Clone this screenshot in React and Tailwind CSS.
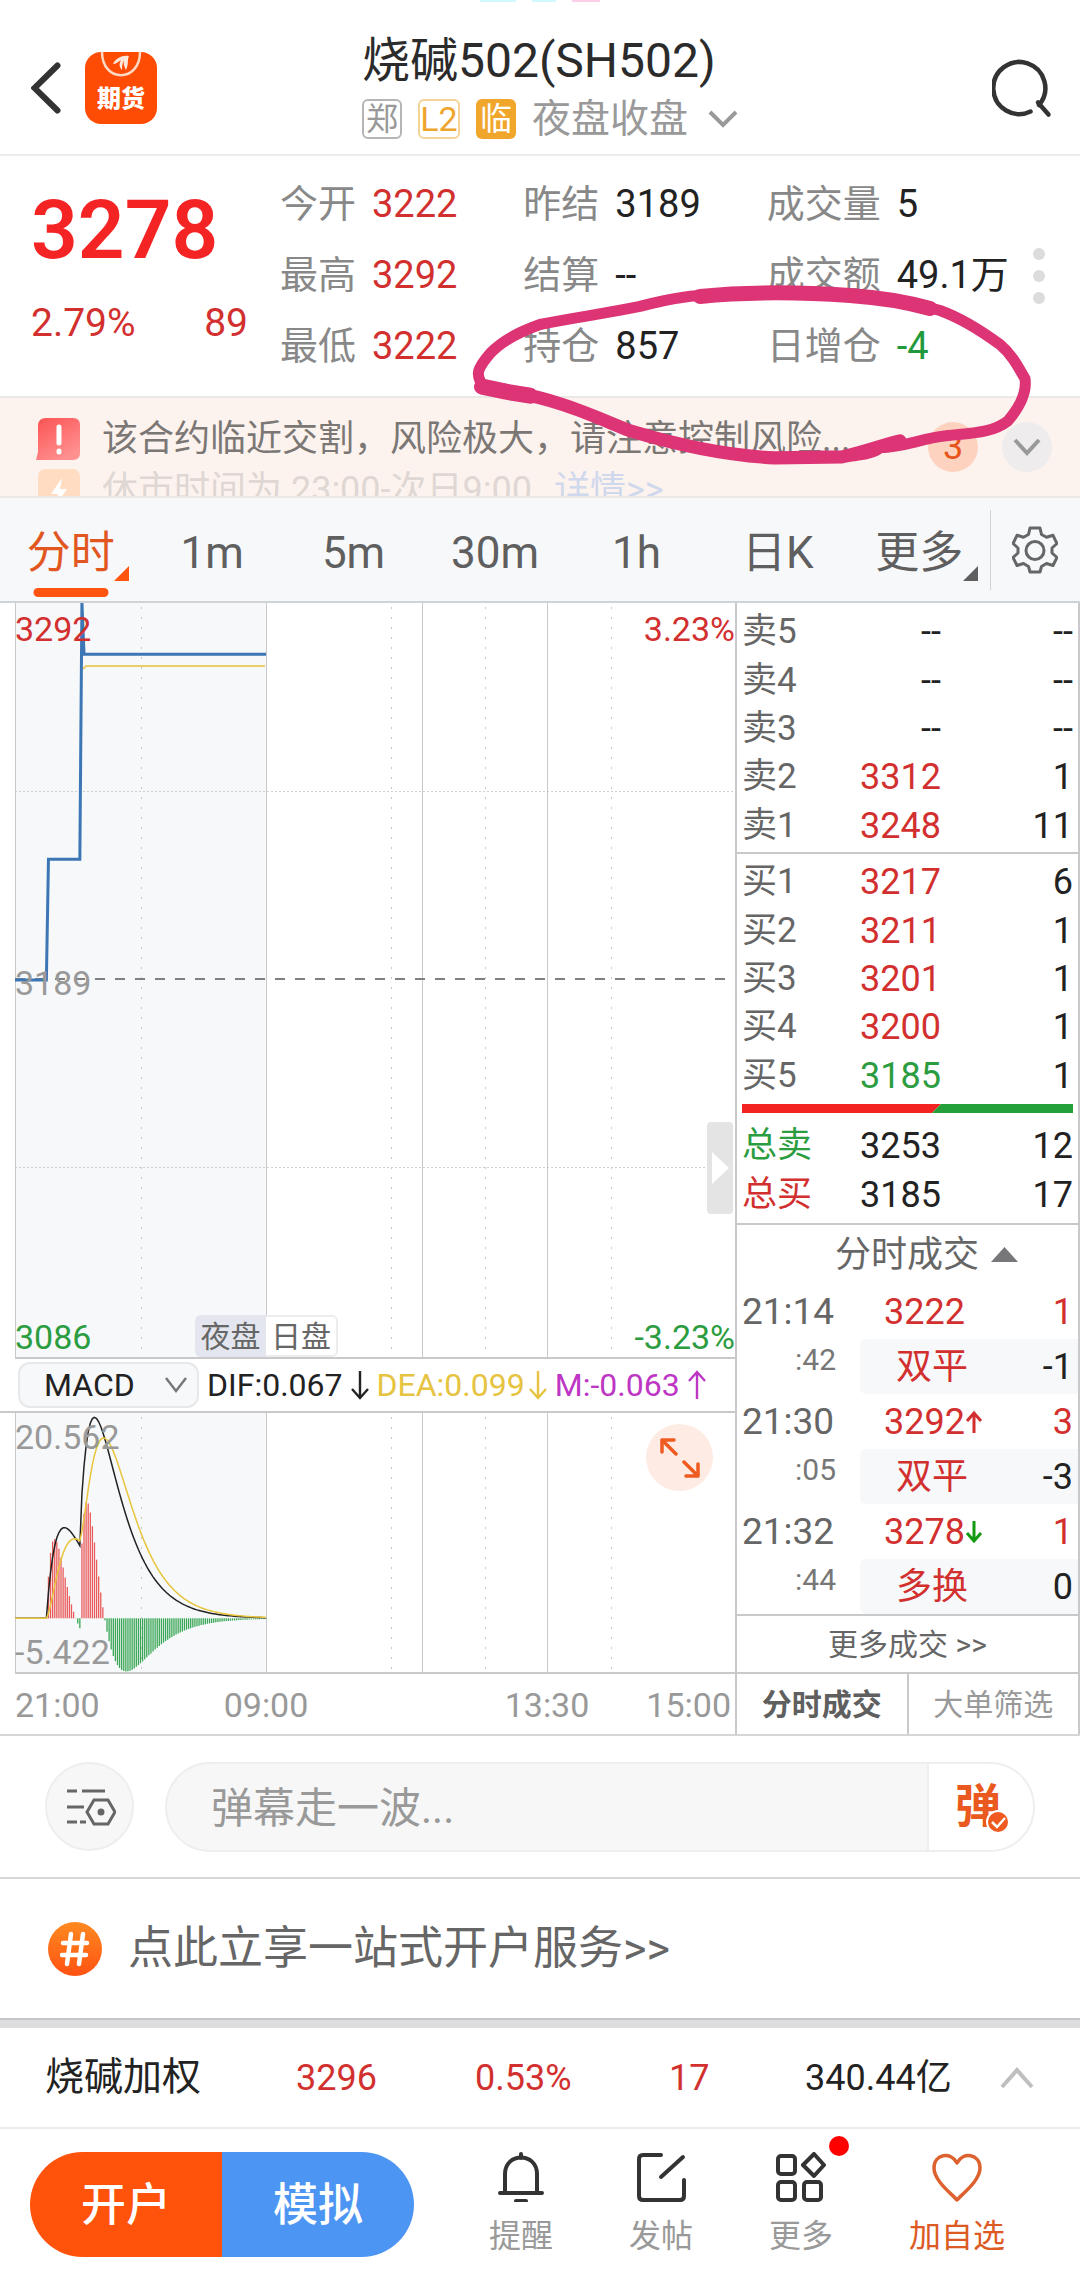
import React from 'react';

const quotes = [
  ['今开', '3222', 'text-[#d2302f]'],
  ['昨结', '3189', 'text-[#222222]'],
  ['成交量', '5', 'text-[#222222]'],
  ['最高', '3292', 'text-[#d2302f]'],
  ['结算', '--', 'text-[#222222]'],
  ['成交额', '49.1万', 'text-[#222222]'],
  ['最低', '3222', 'text-[#d2302f]'],
  ['持仓', '857', 'text-[#222222]'],
  ['日增仓', '-4', 'text-[#219a3c]'],
];

const sells = [
  ['卖5', '--', '--', 'text-[#222222]'],
  ['卖4', '--', '--', 'text-[#222222]'],
  ['卖3', '--', '--', 'text-[#222222]'],
  ['卖2', '3312', '1', 'text-[#d2302f]'],
  ['卖1', '3248', '11', 'text-[#d2302f]'],
];

const buys = [
  ['买1', '3217', '6', 'text-[#d2302f]'],
  ['买2', '3211', '1', 'text-[#d2302f]'],
  ['买3', '3201', '1', 'text-[#d2302f]'],
  ['买4', '3200', '1', 'text-[#d2302f]'],
  ['买5', '3185', '1', 'text-[#2b9c40]'],
];

const trades = [
  { time: '21:14', sec: ':42', price: '3222', volume: '1', kind: '双平', change: '-1' },
  { time: '21:30', sec: ':05', price: '3292', volume: '3', kind: '双平', change: '-3', dir: 'up' },
  { time: '21:32', sec: ':44', price: '3278', volume: '1', kind: '多换', change: '0', dir: 'down' },
];

// One price per minute of the night session (21:00 - 23:00)
const prices = Array.from({ length: 121 }, (_, i) => {
  if (i < 16) return 3189;
  if (i < 32) return 3222;
  if (i < 33) return 3292;
  return 3278;
});

const STEP = 251 / 120;

function macd(series) {
  let fast = series[0];
  let slow = series[0];
  let dea = 0;
  return series.map((p) => {
    fast += (p - fast) * (2 / 13);
    slow += (p - slow) * (2 / 27);
    const dif = fast - slow;
    dea += (dif - dea) * 0.2;
    return { dif, dea, bar: (dif - dea) * 2 };
  });
}

const macdData = macd(prices);
const macdY = (v) => 2 + ((20.562 - v) / 25.984) * 257;
const priceY = (p) => 377 - (p - 3189) * 3.66;
const toPoints = (values, y) => values.map((v, i) => `${(i * STEP).toFixed(2)},${y(v).toFixed(2)}`).join(' ');

function Arrow({ up, className }) {
  return (
    <svg viewBox="0 0 18 30" className={className} fill="none" stroke="currentColor" strokeWidth="2.4" aria-hidden="true">
      {up ? <path d="M9 29V3M1 11l8-9 8 9" /> : <path d="M9 1v26M1 19l8 9 8-9" />}
    </svg>
  );
}

function Grid({ height }) {
  return (
    <>
      <rect x="0" y="0" width="251" height={height} fill="#f6f8fa" />
      <g stroke="#c9c9cb" strokeWidth="1">
        <path d={`M.5 0V${height}M251.5 0V${height}M407.5 0V${height}M532.5 0V${height}`} />
        <path d={`M126.5 4V${height}M376.5 4V${height}M470.5 4V${height}M596.5 4V${height}`} strokeDasharray="2 8" />
      </g>
    </>
  );
}

function Header() {
  return (
    <header className="relative grid grid-cols-[1fr_auto_1fr] items-start h-[156px] border-b-2 border-[#ececec]">
      <div className="absolute top-0 left-[480px] flex gap-4" aria-hidden="true">
        <i className="w-9 h-0.5 bg-cyan-100" />
        <i className="w-6 h-0.5 bg-cyan-100" />
        <i className="w-7 h-0.5 bg-pink-200" />
      </div>
      <div className="flex items-center gap-6 pl-[31px] pt-[52px]">
        <button aria-label="返回">
          <svg viewBox="0 0 30 52" className="w-[30px] h-[52px]" fill="none" stroke="#333" strokeWidth="6" strokeLinecap="round">
            <path d="M26.500 3.500L3.500 26L26.500 48.500" />
          </svg>
        </button>
        <a href="#futures" className="relative w-[72px] h-[72px] rounded-2xl bg-[#ff4c05] overflow-hidden text-white text-center pt-[31px]">
          <svg viewBox="0 0 72 30" className="absolute inset-x-0 top-0 w-full h-[30px]" fill="none">
            <path d="M17 0C17 31 55 31 55 0" stroke="#ffd9c4" strokeWidth="2.500" />
            <path d="M28 12C31 6 37 3 44 4C42 8 44 12 41 18C39 14 38 11 39 8C37 12 37 15 37 18C34 15 34 12 36 8C33 10 31 12 28 12Z" fill="#ffe9dc" />
          </svg>
          <span className="block text-2xl leading-8 font-black">期货</span>
        </a>
      </div>
      <div className="pt-[33px] pl-5">
        <h1 className="text-[48px] leading-14 text-[#2b2b2b]">烧碱502(SH502)</h1>
        <div className="flex items-center gap-4 h-11 mt-2 text-[#999]">
          <span className="w-10 h-10 border-2 border-[#b5b5b5] rounded-md flex items-center justify-center text-[32px] leading-none">郑</span>
          <span className="w-[42px] h-10 border-2 border-[#f3d396] rounded-md flex items-center justify-center text-[34px] leading-none text-[#efa42c]">L2</span>
          <span className="w-10 h-10 bg-[#f0a62b] rounded-md flex items-center justify-center text-[32px] leading-none text-white">临</span>
          <button className="flex items-center gap-5 text-[39px]">
            夜盘收盘
            <svg viewBox="0 0 30 18" className="w-[30px] h-[18px]" fill="none" stroke="#999" strokeWidth="4">
              <path d="M2 2l13 13L28 2" />
            </svg>
          </button>
        </div>
      </div>
      <button aria-label="搜索" className="justify-self-end mr-7 mt-[59px]">
        <svg viewBox="0 0 60 60" className="w-[60px] h-[60px]" fill="none" stroke="#333" strokeWidth="4.500" strokeLinecap="round">
          <path d="M38.500 52.500A26 26 0 1 1 47 46" />
          <path d="M46 43.500L56.500 55.500" />
        </svg>
      </button>
    </header>
  );
}

function Quote() {
  return (
    <section className="flex h-60 text-[38px]">
      <div className="w-[280px] pl-[31px] pt-[34px] text-[#d2302f]">
        <p className="text-[82px] leading-[80px] font-semibold text-[#f52424]">3278</p>
        <p className="flex justify-between pr-8 mt-7 leading-[50px] text-[39px]">
          <span>2.79%</span>
          <span>89</span>
        </p>
      </div>
      <dl className="grid grid-cols-3 flex-1 content-start pt-[13px]">
        {quotes.map(([label, value, color]) => (
          <div key={label} className="flex items-center gap-4 h-[71px] whitespace-nowrap">
            <dt className="text-[#888]">{label}</dt>
            <dd className={color}>{value}</dd>
          </div>
        ))}
      </dl>
      <button aria-label="更多行情" className="flex flex-col items-center gap-2.5 w-[70px] pt-[92px] pr-4 pl-1">
        <i className="w-3 h-3 rounded-full bg-[#dcdcdc] shrink-0" />
        <i className="w-3 h-3 rounded-full bg-[#dcdcdc] shrink-0" />
        <i className="w-3 h-3 rounded-full bg-[#dcdcdc] shrink-0" />
      </button>
    </section>
  );
}

function Notice() {
  return (
    <section className="flex h-[102px] bg-[#fdf3ee] border-y-2 border-[#ebe9e8] overflow-hidden text-4xl text-[#7b7775]">
      <div className="flex-1 pl-9 pt-[15px] whitespace-nowrap">
        <p className="flex items-center gap-[22px] h-[51px]">
          <svg viewBox="0 0 44 42" className="w-11 h-[42px]">
            <defs>
              <linearGradient id="warn" x1="0" y1="0" x2=".6" y2="1">
                <stop offset="0" stopColor="#fb5252" />
                <stop offset="1" stopColor="#ff9090" />
              </linearGradient>
            </defs>
            <path d="M10 0H37Q44 0 44 7V35Q44 42 37 42H0L2 34V8Q2 0 10 0Z" fill="url(#warn)" />
            <path d="M23 9V25M23 33V34" stroke="#fff" strokeWidth="5" strokeLinecap="round" />
          </svg>
          该合约临近交割，风险极大，请注意控制风险...
        </p>
        <p className="flex items-center gap-[22px] h-[51px] text-[#ded7d4]">
          <svg viewBox="0 0 44 42" className="w-11 h-[42px]">
            <rect x="2" y="0" width="42" height="42" rx="7" fill="#ffdcc2" />
            <path d="M26 9L15 25H22L20 36L31 20H24Z" fill="#fff" />
          </svg>
          <span>休市时间为 23:00-次日9:00</span>
          <a href="#hours" className="text-[#cfd8ec]">详情&gt;&gt;</a>
        </p>
      </div>
      <div className="flex gap-6 pr-7 pt-6">
        <span className="w-[50px] h-[50px] rounded-full bg-[#fdd3c0] text-[#e8541a] text-4xl leading-[50px] text-center">3</span>
        <button aria-label="展开公告" className="w-[50px] h-[50px] rounded-full bg-[#eeecec] flex items-center justify-center">
          <svg viewBox="0 0 28 18" className="w-7 h-[18px]" fill="none" stroke="#999" strokeWidth="4">
            <path d="M2 2l12 13L26 2" />
          </svg>
        </button>
      </div>
    </section>
  );
}

// Hand-drawn ring round the open interest figures
function Scribble() {
  return (
    <svg viewBox="0 0 1080 341" preserveAspectRatio="none" className="absolute inset-0 w-full h-full pointer-events-none" fill="none" stroke="#dc3475" strokeLinecap="round" strokeLinejoin="round" aria-hidden="true">
      <path d="M482 230L506 235L530 239" strokeWidth="16" />
      <path d="M484 230C474 218 478 211 490 197C502 184 520 175 540 168C575 161 600 158 640 150C680 139 700 139 730 137C760 134 800 135 850 138C890 140 920 148 940 154C965 163 985 177 1000 188C1012 198 1018 210 1025 222C1027 236 1020 250 1008 264C990 278 965 276 946 279C920 282 905 290 880 291C870 300 840 301 775 301" strokeWidth="11" />
      <path d="M505 234C560 243 590 258 630 274C680 289 730 299 775 301L842 300C860 296 880 289 900 284" strokeWidth="13" />
      <path d="M700 140C740 136 790 135 850 139C880 141 905 145 930 152" strokeWidth="15" />
    </svg>
  );
}

function PeriodTabs() {
  const tabs = ['分时', '1m', '5m', '30m', '1h', '日K', '更多'];
  return (
    <nav className="flex items-center h-[105px] bg-[#f6f8fa] border-b-2 border-[#d0d3d6]">
      {tabs.map((tab, i) => (
        <button
          key={tab}
          className={
            i === 0
              ? 'relative flex-1 h-full pt-1.5 text-[44px] text-[#e2571f]'
              : 'relative flex-1 h-full pt-1.5 text-[44px] text-[#5f5f5f]'
          }
        >
          {tab}
          {(i === 0 || i === 6) && (
            <svg viewBox="0 0 15 15" className="absolute right-3 bottom-5 w-[15px] h-[15px]" fill={i === 0 ? '#ff5310' : '#5f5f5f'}>
              <path d="M15 0V15H0Z" />
            </svg>
          )}
          {i === 0 && <i className="absolute bottom-1 left-1/2 -translate-x-1/2 w-[75px] h-[9px] rounded-full bg-[#ff5310]" />}
        </button>
      ))}
      <button aria-label="设置" className="w-[90px] h-20 border-l border-[#d0d3d6] flex items-center justify-center">
        <svg viewBox="0 0 46 48" className="w-[46px] h-12" fill="none" stroke="#666" strokeWidth="3" strokeLinejoin="round">
          <path d="M18 2h10l1.500 6.500 5 2.800 6.500-2L45 17.500 40 22v5l5 4.500-4 8-6.500-2-5 3L28 46H18l-1.500-5.500-5-3-6.500 2-4-8L6 27v-5l-5-4.500 4-8.200 6.500 2 5-2.800z" />
          <circle cx="23" cy="24.500" r="9" />
        </svg>
      </button>
    </nav>
  );
}

function PriceChart() {
  return (
    <div className="relative h-[756px] ml-[15px] border-b-2 border-[#c9c9cb] text-[34px] leading-10">
      <svg viewBox="0 0 720 754" preserveAspectRatio="none" className="block w-full h-full" fill="none">
        <Grid height={754} />
        <path d="M0 188.500H720M0 564.500H720" stroke="#c4c4c4" strokeDasharray="2 2" strokeOpacity=".8" />
        <path d="M0 376H710" stroke="#808080" strokeWidth="2" strokeDasharray="10 10" />
        <polyline points="68,66 71,63 250,63" stroke="#e8cf6a" strokeWidth="2" />
        <polyline points={toPoints(prices, priceY)} stroke="#3c76b5" strokeWidth="3" />
      </svg>
      <span className="absolute top-1.5 left-0 text-[#d2302f]">3292</span>
      <span className="absolute top-1.5 right-0 text-[#d2302f]">3.23%</span>
      <span className="absolute top-[360px] left-0 text-[#999]">3189</span>
      <span className="absolute bottom-0 left-0 text-[#2b9c40]">3086</span>
      <span className="absolute bottom-0 right-0 text-[#2b9c40]">-3.23%</span>
      <div className="absolute bottom-0 left-[180px] flex h-[42px] text-[30px] text-[#666]">
        <span className="w-[71px] bg-[#e3e6ee] rounded-l-md text-center leading-[44px]">夜盘</span>
        <span className="w-[72px] bg-white border-2 border-l-0 border-[#ededf0] rounded-r-md text-center">日盘</span>
      </div>
      <button aria-label="收起盘口" className="absolute right-[2px] top-[519px] w-[26px] h-[92px] rounded-sm bg-[#e4e4e4] flex items-center justify-center">
        <svg viewBox="0 0 17 32" className="w-[17px] h-8" fill="#fff">
          <path d="M0 0L17 16L0 32Z" />
        </svg>
      </button>
    </div>
  );
}

function MacdChart() {
  return (
    <>
      <div className="flex items-center h-[54px] pl-[18px] text-[32px] whitespace-nowrap border-b-2 border-[#c9c9cb]">
        <button className="flex items-center justify-between w-[181px] h-[46px] pl-6 pr-[10px] border-2 border-[#e6e8ea] bg-[#f6f8fa] rounded-xl text-[#222]">
          MACD
          <svg viewBox="0 0 22 17" className="w-[22px] h-[17px]" fill="none" stroke="#777" strokeWidth="2.500">
            <path d="M1 1l10 13L21 1" />
          </svg>
        </button>
        <span className="flex items-center gap-2 pl-2 text-[#222]">DIF:0.067<Arrow className="w-[18px] h-[30px]" /></span>
        <span className="flex items-center gap-1 pl-2 text-[#e6c340]">DEA:0.099<Arrow className="w-[18px] h-[30px]" /></span>
        <span className="flex items-center gap-2 pl-2 text-[#bd37c4]">M:-0.063<Arrow up className="w-[18px] h-[30px]" /></span>
      </div>
      <div className="relative h-[261px] ml-[15px] border-b-2 border-[#c9c9cb] text-[34px] leading-10 text-[#999]">
        <svg viewBox="0 0 720 259" preserveAspectRatio="none" className="block w-full h-full" fill="none">
          <Grid height={259} />
          {macdData.map((d, i) => (
            <path key={i} d={`M${i * STEP} ${macdY(0)}V${macdY(d.bar)}`} stroke={d.bar > 0 ? '#ea5a5a' : '#3aa655'} strokeWidth="1.300" />
          ))}
          <polyline points={toPoints(macdData.map((d) => d.dif), macdY)} stroke="#222" strokeWidth="1.500" />
          <polyline points={toPoints(macdData.map((d) => d.dea), macdY)} stroke="#e8c53c" strokeWidth="1.500" />
        </svg>
        <span className="absolute top-1 left-0">20.562</span>
        <span className="absolute bottom-0 left-0">-5.422</span>
        <button aria-label="全屏" className="absolute right-[22px] top-[11px] w-[67px] h-[67px] rounded-full bg-[#feece4] flex items-center justify-center">
          <svg viewBox="0 0 40 40" className="w-10 h-10" fill="none" stroke="#ee5a20" strokeWidth="3.500" strokeLinecap="round" strokeLinejoin="round">
            <path d="M2 14V2H14M2 2L16 16M38 26V38H26M38 38L24 24" />
          </svg>
        </button>
      </div>
      <div className="relative h-[60px] ml-[15px] text-[34px] leading-[62px] text-[#999]">
        <span className="absolute left-0">21:00</span>
        <span className="absolute left-[251px] -translate-x-1/2">09:00</span>
        <span className="absolute left-[532px] -translate-x-1/2">13:30</span>
        <span className="absolute right-1">15:00</span>
      </div>
    </>
  );
}

function Levels({ rows }) {
  return (
    <table className="w-full h-[242px] text-right">
      <tbody>
        {rows.map(([label, price, volume, color]) => (
          <tr key={label}>
            <th className="w-20 p-0 text-left text-[35px] leading-10 font-normal text-[#666]">{label}</th>
            <td className={`w-[119px] p-0 text-4xl ${color}`}>{price}</td>
            <td className="p-0 text-4xl text-[#222]">{volume}</td>
          </tr>
        ))}
      </tbody>
    </table>
  );
}

function OrderBook() {
  return (
    <aside className="w-[345px] border-x-2 border-[#c9c9cb] flex flex-col">
      <div className="pl-[5px] pr-[5px] pt-[5px] pb-[2px] border-b-2 border-[#c9c9cb]">
        <Levels rows={sells} />
      </div>
      <div className="pl-[5px] pr-[5px] pt-[4px] h-[371px] border-b-2 border-[#c9c9cb]">
        <Levels rows={buys} />
        <svg viewBox="0 0 331 9" preserveAspectRatio="none" className="block w-full h-[9px] mt-1">
          <path d="M0 0H199L190 9H0Z" fill="#f22320" />
          <path d="M199 0H331V9H190Z" fill="#23a03a" />
        </svg>
        <table className="w-full h-[98px] mt-2 text-right text-4xl text-[#222]">
          <tbody>
            <tr>
              <th className="w-20 p-0 text-left text-[35px] leading-10 font-normal text-[#2b9c40]">总卖</th>
              <td className="w-[119px] p-0">3253</td>
              <td className="p-0">12</td>
            </tr>
            <tr>
              <th className="w-20 p-0 text-left text-[35px] leading-10 font-normal text-[#d2302f]">总买</th>
              <td className="w-[119px] p-0">3185</td>
              <td className="p-0">17</td>
            </tr>
          </tbody>
        </table>
      </div>
      <button className="flex items-center justify-center gap-3 h-[59px] pl-[38px] text-4xl text-[#666]">
        分时成交
        <svg viewBox="0 0 27 15" className="w-[27px] h-[15px]" fill="#777779">
          <path d="M13.500 0L27 15H0Z" />
        </svg>
      </button>
      <ul className="text-4xl">
        {trades.map((t) => (
          <li key={t.time} className="h-[110px] pl-[5px]">
            <div className="flex items-center h-[55px] pr-[5px]">
              <span className="w-[142px] text-[37px] text-[#666]">{t.time}</span>
              <span className="text-[#d2302f]">{t.price}</span>
              {t.dir && (
                <svg viewBox="0 0 18 24" className={t.dir === 'up' ? 'w-[18px] h-6 text-[#d2302f]' : 'w-[18px] h-6 text-[#139a13]'} fill="none" stroke="currentColor" strokeWidth="3">
                  {t.dir === 'up' ? <path d="M9 23V3M2 11l7-8 7 8" /> : <path d="M9 1v20M2 13l7 8 7-8" />}
                </svg>
              )}
              <span className="ml-auto text-[#d2302f]">{t.volume}</span>
            </div>
            <div className="flex h-[55px]">
              <span className="w-[94px] text-right text-[30px] leading-[42px] text-[#777]">{t.sec}</span>
              <span className="flex-1 flex items-center justify-between ml-6 pl-9 pr-[5px] rounded-l-md bg-[#f6f8fa] text-[#222]">
                <span className="text-[#d2302f]">{t.kind}</span>
                {t.change}
              </span>
            </div>
          </li>
        ))}
      </ul>
      <a href="#trades" className="h-[60px] border-y-2 border-[#c9c9cb] text-center text-[30px] leading-[58px] text-[#666]">更多成交 &gt;&gt;</a>
      <div className="flex-1 flex text-[30px]">
        <button className="flex-1 border-r-2 border-[#c9c9cb] font-bold text-[#5f5f5f]">分时成交</button>
        <button className="flex-1 text-[#999]">大单筛选</button>
      </div>
    </aside>
  );
}

function Danmaku() {
  return (
    <section className="flex items-center gap-[31px] h-[145px] pl-[45px] pr-[45px] border-y-2 border-[#d6d6d6]">
      <button aria-label="弹幕设置" className="w-[89px] h-[89px] rounded-full bg-[#f7f7f7] border-2 border-[#eeeeee] flex items-center justify-center">
        <svg viewBox="0 0 52 38" className="w-[52px] h-[38px]" fill="none" stroke="#666" strokeWidth="3">
          <path d="M3 3H13M18 3H41M3 19H20M3 34H13M16 34H22M30 12H44L51 24L44 36H30L23 24Z" />
          <circle cx="37" cy="24" r="2" fill="#666" />
        </svg>
      </button>
      <label className="flex-1 flex h-[90px] rounded-full border-2 border-[#eeeeee] bg-[#f7f7f7] overflow-hidden">
        <input aria-label="弹幕" placeholder="弹幕走一波..." className="flex-1 min-w-0 pl-11 pt-1 text-[42px] outline-none placeholder:text-[#999]" />
        <button className="relative w-[106px] bg-white border-l-2 border-[#eeeeee] pl-[26px] text-left text-[46px] font-bold text-[#ea5a20]">
          弹
          <svg viewBox="0 0 24 24" className="absolute left-[57px] top-[46px] w-6 h-6">
            <circle cx="12" cy="12" r="11" fill="#ee5a20" stroke="#fff" strokeWidth="2" />
            <path d="M6 12l5 5 8-9" fill="none" stroke="#fff" strokeWidth="2.500" />
          </svg>
        </button>
      </label>
    </section>
  );
}

function Footer() {
  const actions = [
    {
      label: '提醒',
      icon: <path d="M23 2V6M7 41V22C7 0 39 0 39 22V41M2 41H44M18 49H28" />,
    },
    {
      label: '发帖',
      icon: <path d="M23 3H5Q1 3 1 7V44Q1 48 5 48H42Q46 48 46 44V28M45 5L23 25" />,
    },
    {
      label: '更多',
      dot: true,
      icon: (
        <>
          <rect x="0" y="4" width="17" height="18" rx="3" />
          <rect x="0" y="30" width="17" height="18" rx="3" />
          <rect x="26" y="30" width="17" height="18" rx="3" />
          <path d="M36 2L46 13L36 24L25 13Z" />
        </>
      ),
    },
  ];
  return (
    <footer className="flex items-center h-[154px] pl-[30px] pr-[75px] pb-1">
      <div className="flex w-[384px] h-[105px] rounded-full overflow-hidden text-[45px] text-white font-medium">
        <button className="flex-1 pt-1 bg-[#ff530c]">开户</button>
        <button className="flex-1 pt-1 bg-[#4c95f3]">模拟</button>
      </div>
      <div className="flex-1 flex justify-between pl-[75px] text-[32px] leading-10 text-[#999]">
        {actions.map((a) => (
          <button key={a.label} className="relative flex flex-col items-center gap-[14px]">
            <svg viewBox="-2 0 50 50" className="w-[50px] h-[50px]" fill="none" stroke="#333" strokeWidth="4" strokeLinecap="round" strokeLinejoin="round">
              {a.icon}
            </svg>
            {a.label}
            {a.dot && <i className="absolute -top-4 -right-4 w-5 h-5 rounded-full bg-[#ff0000]" />}
          </button>
        ))}
        <button className="flex flex-col items-center gap-[14px] text-[#dc5a24]">
          <svg viewBox="0 0 50 50" className="w-[50px] h-[50px]" fill="none" stroke="#dd6230" strokeWidth="3.500" strokeLinejoin="round">
            <path d="M25 48C20 42 2 29 2 16C2 2 19 -1 25 11C31 -1 48 2 48 16C48 29 30 42 25 48Z" />
          </svg>
          加自选
        </button>
      </div>
    </footer>
  );
}

export default function App() {
  return (
    <main className="w-full bg-white font-[Roboto,'Noto_Sans_CJK_SC',sans-serif]">
      <Header />
      <div className="relative">
        <Quote />
        <Notice />
        <Scribble />
      </div>
      <PeriodTabs />

      {/* Charts and order book */}
      <div className="flex">
        <div className="flex-1 min-w-0">
          <PriceChart />
          <MacdChart />
        </div>
        <OrderBook />
      </div>

      <Danmaku />

      {/* Open account promo */}
      <a href="#open" className="flex items-center gap-[26px] h-[139px] pl-12 text-[45px] text-[#666]">
        <svg viewBox="0 0 54 54" className="w-[54px] h-[54px]">
          <defs>
            <linearGradient id="promo" x1="0" y1="0" x2="0" y2="1">
              <stop offset="0" stopColor="#ff8a20" />
              <stop offset="1" stopColor="#ff5212" />
            </linearGradient>
          </defs>
          <circle cx="27" cy="27" r="27" fill="url(#promo)" />
          <path d="M23 12L19 42M35 12L31 42M15 21H39M14 33H38" stroke="#fff" strokeWidth="4.500" strokeLinecap="round" />
        </svg>
        点此立享一站式开户服务&gt;&gt;
      </a>
      <div className="h-[10px] bg-[#dcdddf] border-t-2 border-[#c6c6c8]" />

      {/* Index ticker */}
      <div className="flex items-center h-[101px] pl-[45px] pr-[46px] border-b-2 border-[#ebebeb] text-4xl text-[#d2302f]">
        <span className="w-[251px] text-[39px] text-[#222]">烧碱加权</span>
        <span className="w-[179px]">3296</span>
        <span className="w-[194px]">0.53%</span>
        <span className="w-[136px]">17</span>
        <span className="text-[#222]">340.44亿</span>
        <button aria-label="展开指数" className="ml-auto">
          <svg viewBox="0 0 34 22" className="w-[34px] h-[22px]" fill="none" stroke="#bfbfbf" strokeWidth="4">
            <path d="M2 20L17 3L32 20" />
          </svg>
        </button>
      </div>
      <Footer />
    </main>
  );
}
